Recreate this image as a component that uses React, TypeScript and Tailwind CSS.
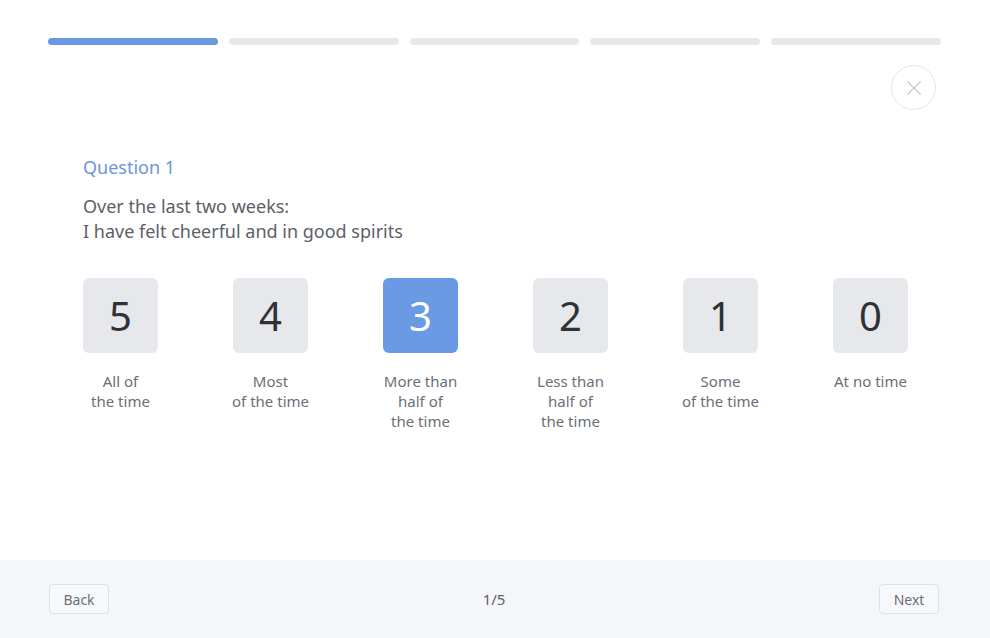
import { X } from "lucide-react";

const options = [
  { value: 5, label: ["All of", "the time"] },
  { value: 4, label: ["Most", "of the time"] },
  { value: 3, label: ["More than", "half of", "the time"] },
  { value: 2, label: ["Less than", "half of", "the time"] },
  { value: 1, label: ["Some", "of the time"] },
  { value: 0, label: ["At no time"] },
];

const selected = 3;

export default function App() {
  return (
    <div
      className="flex h-[638px] w-[990px] flex-col bg-white"
      style={{ fontFamily: '"Noto Sans", "Open Sans", sans-serif' }}
    >
      <div className="flex-1">
        {/* progress */}
        <div className="flex gap-[11px] pl-12 pr-[49px] pt-[38px]">
          {[0, 1, 2, 3, 4].map((i) => (
            <div
              key={i}
              className={`h-[7px] flex-1 rounded-full ${
                i === 0 ? "bg-[#6a98e0]" : "bg-[#e6e8ec]"
              }`}
            />
          ))}
        </div>

        <div className="flex justify-end pr-[54px] pt-5">
          <button className="flex h-[45px] w-[45px] items-center justify-center rounded-full border border-[#e3e5e9] text-[#c3c7ce]">
            <X className="h-[26px] w-[26px]" strokeWidth={1} />
          </button>
        </div>

        <div className="pl-[83px] pr-[82px] pt-[45px]">
          <div className="text-[18px] leading-6 text-[#6b97d8]">Question 1</div>
          <div className="mt-[15px] text-[18px] leading-[25px] text-[#5c6068]">
            <div>Over the last two weeks:</div>
            <div>I have felt cheerful and in good spirits</div>
          </div>

          <div className="mt-[34px] flex justify-between">
            {options.map((o) => (
              <div key={o.value} className="flex w-[75px] flex-col items-center">
                <button
                  className={`flex h-[75px] w-[75px] items-center justify-center rounded-md text-[40px] ${
                    o.value === selected
                      ? "bg-[#6a9ae4] text-white"
                      : "bg-[#e6e8ec] text-[#2e3136]"
                  }`}
                >
                  {o.value}
                </button>
                <div className="mt-[18px] whitespace-nowrap text-center text-[15px] leading-5 text-[#6b6f76]">
                  {o.label.map((l) => (
                    <div key={l}>{l}</div>
                  ))}
                </div>
              </div>
            ))}
          </div>
        </div>
      </div>

      <div className="flex h-[78px] items-center justify-between bg-[#f5f6fa] pl-[49px] pr-[51px]">
        <button className="h-[30px] w-[60px] rounded-sm border border-[#dde0e5] bg-[#f7f8fb] text-[14px] text-[#6b6f76]">
          Back
        </button>
        <div className="text-[15px] text-[#5c6068]">1/5</div>
        <button className="h-[30px] w-[60px] rounded-sm border border-[#dde0e5] bg-[#f7f8fb] text-[14px] text-[#6b6f76]">
          Next
        </button>
      </div>
    </div>
  );
}
